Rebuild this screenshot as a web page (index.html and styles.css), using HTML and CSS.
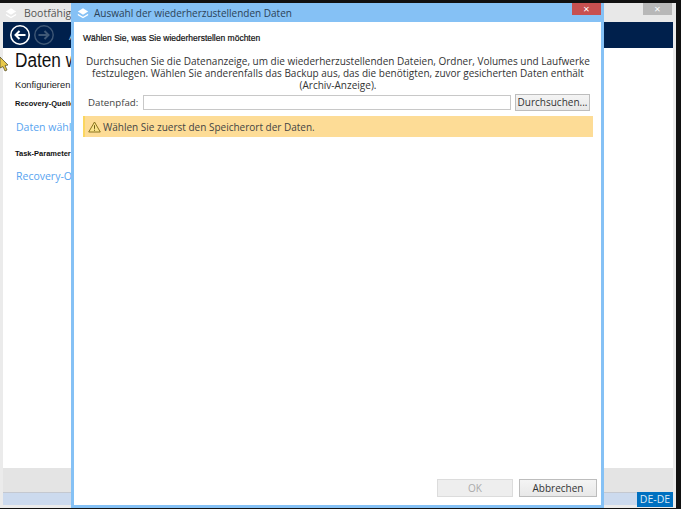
FILE: index.html
```html
<!DOCTYPE html>
<html lang="de">
<head>
<meta charset="utf-8">
<title>Auswahl der wiederherzustellenden Daten</title>
<link rel="stylesheet" href="styles.css">
</head>
<body>
<div class="desktop">
  <section class="bg-window">
    <header class="bg-title">
      <svg class="layers" viewBox="0 0 14 13"><path class="l2" d="M1 7.500 7 11l6-3.500v1.500l-6 3.500L1 9z"/><path class="l1" d="M7 1l6 3.700L7 8.500 1 4.700z"/></svg>
      <span class="bg-title-text">Bootfähige</span>
      <span class="bg-close">×</span>
    </header>
    <nav class="bg-nav">
      <svg class="nav-btn" viewBox="0 0 22 22"><circle cx="11" cy="11" r="9.200" fill="none" stroke="#fff" stroke-width="1.600"/><path d="M16.500 11H7M10.500 7l-4 4 4 4" fill="none" stroke="#fff" stroke-width="2"/></svg>
      <svg class="nav-btn" viewBox="0 0 22 22"><circle cx="11" cy="11" r="9.200" fill="none" stroke="#3f5876" stroke-width="1.400"/><path d="M5.500 11H15M11.500 7l4 4-4 4" fill="none" stroke="#3f5876" stroke-width="2"/></svg>
      <span class="nav-text">A</span>
    </nav>
    <main class="bg-main">
      <h1 class="bg-h1">Daten wählen</h1>
      <p class="bg-sub">Konfigurieren Sie</p>
      <h2 class="bg-h2">Recovery-Quelle</h2>
      <a class="bg-link">Daten wählen</a>
      <h2 class="bg-h2 second">Task-Parameter</h2>
      <a class="bg-link">Recovery-Optionen</a>
    </main>
    <div class="bg-footer"></div>
    <div class="bg-strip"></div>
  </section>

  <svg class="cursor" viewBox="0 0 9 16"><path d="M0 1l8 8-3 .5 2 4.500-2 1-2-4.500L0 12z" fill="#e8c94a" stroke="#5c5430" stroke-width=".8"/></svg>

  <section class="dialog">
    <header class="dlg-title">
      <svg class="layers" viewBox="0 0 14 13"><path class="l2" d="M1 7.500 7 11l6-3.500v1.500l-6 3.500L1 9z"/><path class="l1" d="M7 1l6 3.700L7 8.500 1 4.700z"/></svg>
      <span class="dlg-title-text">Auswahl der wiederherzustellenden Daten</span>
      <span class="dlg-close">×</span>
    </header>
    <div class="dlg-body">
      <h2 class="dlg-h">Wählen Sie, was Sie wiederherstellen möchten</h2>
      <p class="dlg-desc">Durchsuchen Sie die Datenanzeige, um die wiederherzustellenden Dateien, Ordner, Volumes und Laufwerke festzulegen. Wählen Sie anderenfalls das Backup aus, das die benötigten, zuvor gesicherten Daten enthält (Archiv-Anzeige).</p>
      <div class="path-row">
        <label class="path-label">Datenpfad:</label>
        <div class="path-input"></div>
        <button class="btn browse">Durchsuchen...</button>
      </div>
      <div class="warning">
        <svg class="warn-icon" viewBox="0 0 13 12"><path d="M6.500 1 12.300 11H.7z" fill="#fbe38a" stroke="#8a7420" stroke-width="1"/><path d="M6.500 4.200v3.600M6.500 8.700v1.100" stroke="#6b5a18" stroke-width="1"/></svg>
        <span>Wählen Sie zuerst den Speicherort der Daten.</span>
      </div>
      <div class="dlg-actions">
        <button class="btn ok" disabled>OK</button>
        <button class="btn cancel">Abbrechen</button>
      </div>
    </div>
  </section>

  <div class="locale">DE-DE</div>
</div>
</body>
</html>
```

FILE: styles.css
```css
* { box-sizing: border-box; }
html, body { margin: 0; padding: 0; }
body { width: 681px; height: 509px; overflow: hidden; background: #111; font-family: "Open Sans", "Noto Sans", sans-serif; }
.desktop { position: relative; width: 681px; height: 509px; overflow: hidden; background: #111; }

.layers { width: 12px; height: 12px; flex: none; }
.layers .l1, .layers .l2 { fill: #fff; }

.bg-window { position: absolute; left: 0; top: 3px; width: 676px; height: 505px; display: flex; flex-direction: column; background: #ebebeb; padding: 0 3px 3px; }
.bg-title { height: 19px; margin: 0 -3px; padding-left: 5px; display: flex; align-items: center; gap: 7px; background: #e8e8e8; position: relative; flex: none; }
.bg-title-text { font-size: 10.500px; color: #555; }
.bg-close { position: absolute; left: 643px; top: 0; width: 29px; height: 12px; background: #b8b8b8; color: #fff; font-size: 11px; line-height: 11px; text-align: center; }
.bg-nav { height: 26px; background: #00204c; display: flex; align-items: center; gap: 2px; padding-left: 6px; flex: none; }
.nav-btn { width: 22px; height: 22px; flex: none; }
.nav-text { color: #b9c3d1; font-size: 11px; margin-left: 12px; }
.bg-main { height: 420px; background: #fff; padding-left: 12px; flex: none; overflow: hidden; }
.bg-h1 { margin: 0; font: 400 20px/24px "Liberation Sans", sans-serif; color: #111; white-space: nowrap; transform: scaleX(.86); transform-origin: left center; }
.bg-sub { margin: 6px 0 0; font: 400 9.300px/14px "Liberation Sans", sans-serif; color: #222; white-space: nowrap; }
.bg-h2 { margin: 6px 0 0; font: 700 7.500px/12px "Liberation Sans", sans-serif; color: #111; white-space: nowrap; }
.bg-h2.second { margin-top: 13px; }
.bg-link { display: block; margin-top: 8.500px; padding-left: 1px; font-size: 10.500px; line-height: 16px; color: #58a4f0; white-space: nowrap; }
.bg-footer { height: 25px; background: #e4e4e4; border-bottom: 1px solid #c4c8d0; flex: none; }
.bg-strip { flex: 1; background: #ccdaee; }

.cursor { position: absolute; left: 0; top: 56px; width: 9px; height: 16px; }

.dialog { position: absolute; left: 71px; top: 3px; width: 533px; height: 505px; background: #85c1f5; padding: 0 3px 3px; display: flex; flex-direction: column; }
.dlg-title { height: 19px; flex: none; display: flex; align-items: center; gap: 5px; padding-left: 3px; position: relative; }
.dlg-title-text { font-size: 10px; color: #2c4257; }
.dlg-close { position: absolute; left: 498px; top: 0; width: 29px; height: 12px; background: #c75050; color: #fff; font-size: 11px; line-height: 11px; text-align: center; }
.dlg-body { flex: 1; background: #fff; padding: 9px 4px 8px 9px; display: flex; flex-direction: column; }
.dlg-h { margin: 0; font: 400 8.500px/14px "Liberation Sans", sans-serif; color: #111; -webkit-text-stroke: .2px #111; }
.dlg-desc { margin: 10px 0 0; width: 510px; text-align: center; font-size: 10px; line-height: 12px; color: #333; }
.path-row { display: flex; align-items: center; margin-top: 1px; padding-left: 5px; height: 20px; }
.path-label { font-size: 9.700px; color: #444; width: 55px; flex: none; }
.path-input { width: 368px; height: 15px; background: #fff; border: 1px solid #c8c8c8; flex: none; }
.btn { font-family: "Open Sans", "Noto Sans", sans-serif; font-size: 10px; color: #333; background: linear-gradient(#f4f4f4, #e8e8e8); border: 1px solid #bdbdbd; padding: 0; }
.browse { width: 75px; height: 17px; margin-left: 4px; flex: none; }
.warning { display: flex; align-items: center; gap: 2px; height: 21px; margin-top: 4px; width: 510px; background: #fddc96; border-left: 2px solid #fbd65f; padding-left: 3px; font-size: 10px; color: #444; }
.warn-icon { width: 13px; height: 12px; flex: none; }
.dlg-actions { margin-top: auto; display: flex; justify-content: flex-end; gap: 6px; }
.ok { width: 76px; height: 18px; background: #eeeeee; border-color: #dcdcdc; color: #aaa; }
.cancel { width: 78px; height: 18px; }

.locale { position: absolute; left: 637px; top: 492px; width: 36px; height: 15px; background: #0070c0; color: #dbeaf6; font-size: 10.500px; line-height: 15px; text-align: center; }
```
